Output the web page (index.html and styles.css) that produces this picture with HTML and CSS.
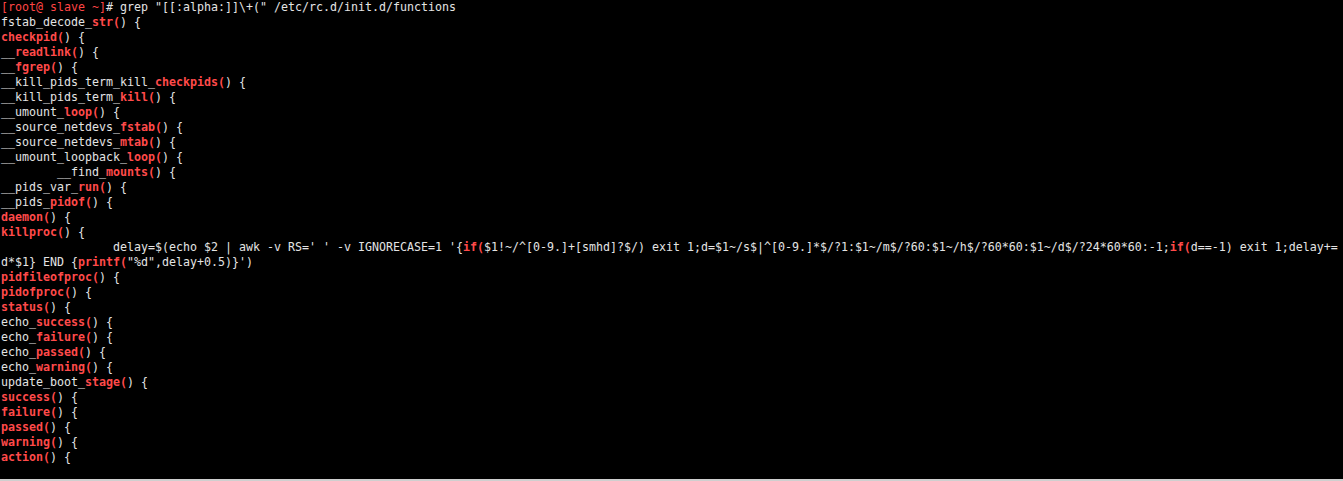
FILE: index.html
```html
<!DOCTYPE html>
<html>
<head>
<meta charset="utf-8">
<link rel="stylesheet" href="styles.css">
</head>
<body>
<pre class="term"><span class="p">[root@ slave ~]</span># grep "[[:alpha:]]\+(" /etc/rc.d/init.d/functions
fstab_decode_<b>str(</b>) {
<b>checkpid(</b>) {
__<b>readlink(</b>) {
__<b>fgrep(</b>) {
__kill_pids_term_kill_<b>checkpids(</b>) {
__kill_pids_term_<b>kill(</b>) {
__umount_<b>loop(</b>) {
__source_netdevs_<b>fstab(</b>) {
__source_netdevs_<b>mtab(</b>) {
__umount_loopback_<b>loop(</b>) {
        __find_<b>mounts(</b>) {
__pids_var_<b>run(</b>) {
__pids_<b>pidof(</b>) {
<b>daemon(</b>) {
<b>killproc(</b>) {
                delay=$(echo $2 | awk -v RS=' ' -v IGNORECASE=1 '{<b>if(</b>$1!~/^[0-9.]+[smhd]?$/) exit 1;d=$1~/s$|^[0-9.]*$/?1:$1~/m$/?60:$1~/h$/?60*60:$1~/d$/?24*60*60:-1;<b>if(</b>d==-1) exit 1;delay+=
d*$1} END {<b>printf(</b>"%d",delay+0.5)}')
<b>pidfileofproc(</b>) {
<b>pidofproc(</b>) {
<b>status(</b>) {
echo_<b>success(</b>) {
echo_<b>failure(</b>) {
echo_<b>passed(</b>) {
echo_<b>warning(</b>) {
update_boot_<b>stage(</b>) {
<b>success(</b>) {
<b>failure(</b>) {
<b>passed(</b>) {
<b>warning(</b>) {
<b>action(</b>) {
</pre>
</body>
</html>
```
FILE: styles.css
```css
html, body {
  margin: 0;
  padding: 0;
  background: #000;
}

.term {
  margin: 0;
  box-sizing: border-box;
  width: 1343px;
  height: 481px;
  padding: 0 0 0 1px;
  background: #000;
  color: #e4e4e4;
  font-family: "DejaVu Sans Mono", "Liberation Mono", monospace;
  font-size: 11.63px;
  line-height: 15px;
  white-space: pre;
  overflow: hidden;
  border-bottom: 2px solid #cfcfcf;
}

.term b {
  color: #ff4a4a;
  font-weight: bold;
}

.term .p {
  color: #ff4545;
}
```
